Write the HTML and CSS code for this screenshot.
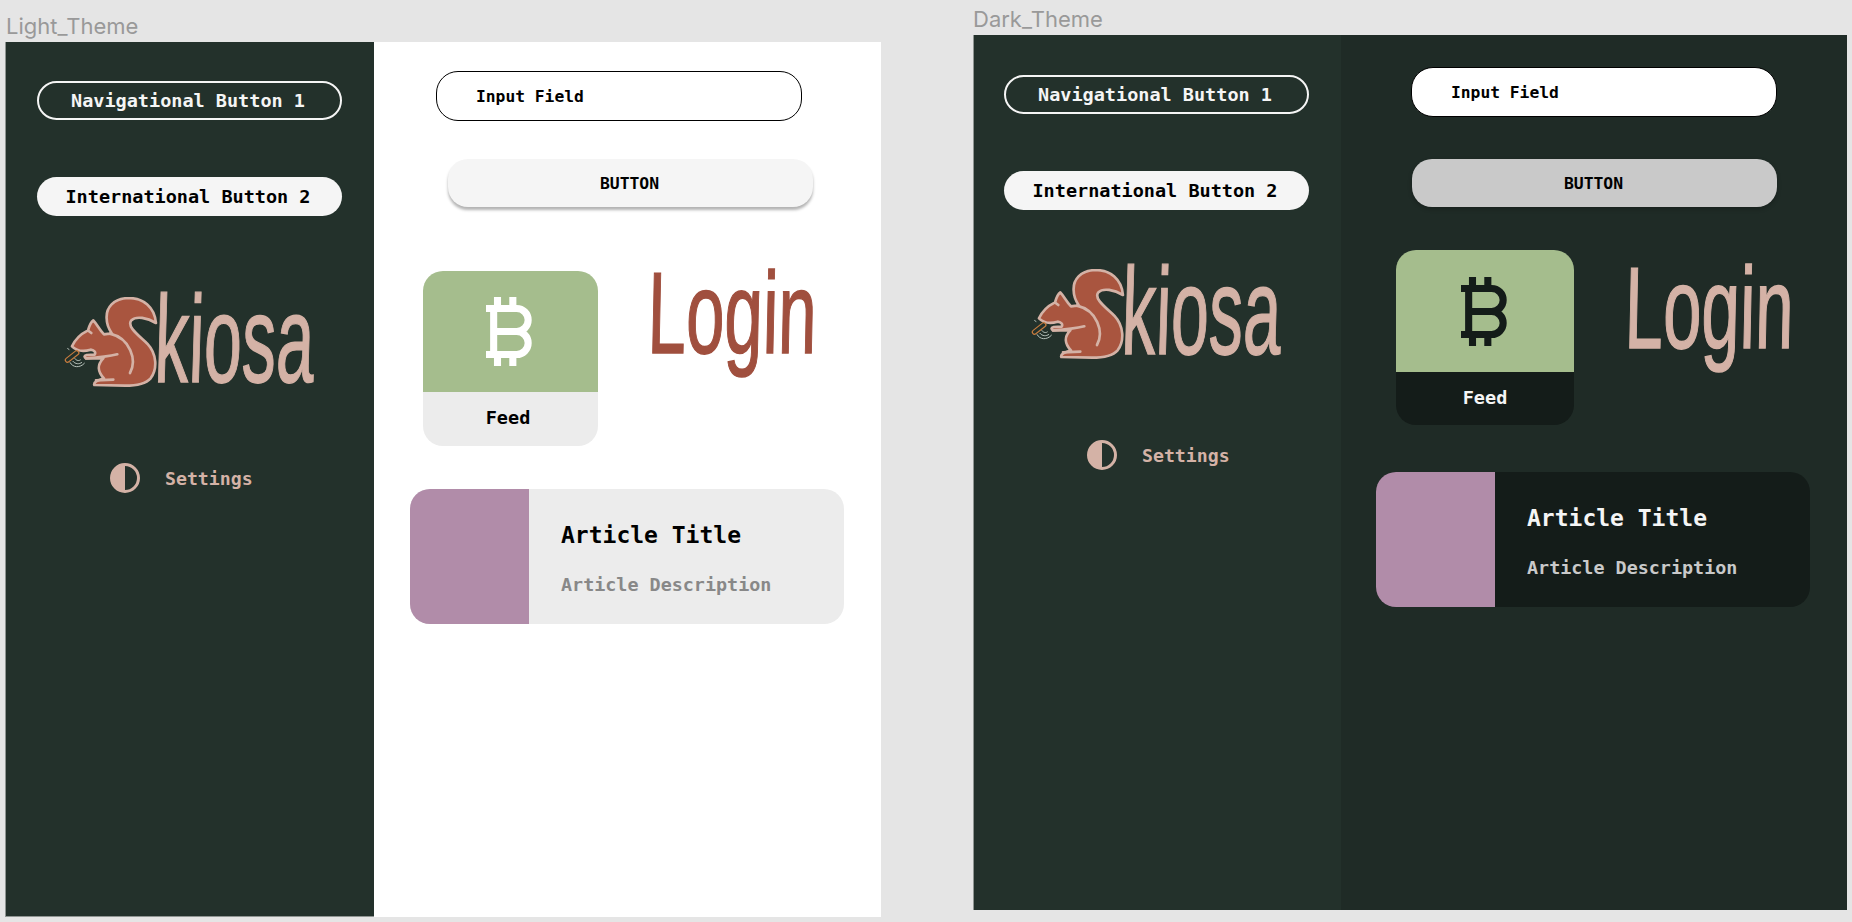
FILE: index.html
```html
<!DOCTYPE html>
<html lang="en">
<head>
<meta charset="utf-8">
<title>Themes</title>
<link rel="stylesheet" href="styles.css">
</head>
<body>
<svg class="defs" width="0" height="0" aria-hidden="true">
  <defs>
    <symbol id="squirrel" viewBox="0 -12 295 270">
      <path class="sq-body" d="M140 52C138 20 160 -7 205 -9C250 -9 284 18 288 66C262 50 228 44 214 58C200 76 232 100 262 128C292 160 292 205 272 232C256 250 225 254 195 254L103 252C100 244 112 238 132 232C114 214 110 192 130 172L78 172C72 168 72 164 80 162L104 161C108 154 104 148 92 146C72 152 50 150 36 136C44 118 60 100 84 88C88 74 94 62 100 58C110 68 118 86 132 100C142 98 150 98 156 98C146 84 140 70 140 52Z"/>
      <path class="sq-line" d="M210 216C232 176 210 112 150 98M78 172C110 170 140 168 172 160M108 238L160 236M86 90L94 96"/>
      <rect class="sq-nut" x="12" y="160" width="48" height="13" rx="6.5" transform="rotate(-38 36 166)"/>
      <path class="sq-wifi" d="M38 180C46 190 58 190 66 184M44 172C50 180 58 180 62 176M30 184C38 200 60 202 74 186M28 146L22 142"/>
    </symbol>
    <symbol id="bitcoin" viewBox="6 3 12 18">
      <path class="btc" d="M6 6h8a3 3 0 0 1 0 6a3 3 0 0 1 0 6h-8M8 6v12M8 12h6M9 3v3M13 3v3M9 18v3M13 18v3"/>
    </symbol>
  </defs>
</svg>

<section class="board light">
  <h2 class="board-label">Light_Theme</h2>
  <div class="frame">
    <aside class="sidebar">
      <a class="nav-btn outline">Navigational Button 1</a>
      <a class="nav-btn solid">International Button 2</a>
      <div class="logo">
        <svg class="squirrel"><use href="#squirrel"/></svg>
        <span class="logo-text">kiosa</span>
      </div>
      <div class="settings">
        <svg class="contrast" viewBox="0 0 30 30"><circle class="ring" cx="15" cy="15" r="13.5"/><path class="half" d="M15 1.5a13.500 13.500 0 0 0 0 27Z"/></svg>
        <span>Settings</span>
      </div>
    </aside>
    <main class="content">
      <div class="input">Input Field</div>
      <button class="action">BUTTON</button>
      <div class="row">
        <div class="feed">
          <div class="feed-top"><svg class="btc-icon"><use href="#bitcoin"/></svg></div>
          <div class="feed-label">Feed</div>
        </div>
        <div class="login">Login</div>
      </div>
      <article class="article">
        <div class="thumb"></div>
        <div class="article-body">
          <h3>Article Title</h3>
          <p>Article Description</p>
        </div>
      </article>
    </main>
  </div>
</section>

<section class="board dark">
  <h2 class="board-label">Dark_Theme</h2>
  <div class="frame">
    <aside class="sidebar">
      <a class="nav-btn outline">Navigational Button 1</a>
      <a class="nav-btn solid">International Button 2</a>
      <div class="logo">
        <svg class="squirrel"><use href="#squirrel"/></svg>
        <span class="logo-text">kiosa</span>
      </div>
      <div class="settings">
        <svg class="contrast" viewBox="0 0 30 30"><circle class="ring" cx="15" cy="15" r="13.5"/><path class="half" d="M15 1.5a13.500 13.500 0 0 0 0 27Z"/></svg>
        <span>Settings</span>
      </div>
    </aside>
    <main class="content">
      <div class="input">Input Field</div>
      <button class="action">BUTTON</button>
      <div class="row">
        <div class="feed">
          <div class="feed-top"><svg class="btc-icon"><use href="#bitcoin"/></svg></div>
          <div class="feed-label">Feed</div>
        </div>
        <div class="login">Login</div>
      </div>
      <article class="article">
        <div class="thumb"></div>
        <div class="article-body">
          <h3>Article Title</h3>
          <p>Article Description</p>
        </div>
      </article>
    </main>
  </div>
</section>
</body>
</html>
```
FILE: styles.css
```css
* { box-sizing: border-box; }
html, body { margin: 0; height: 100%; overflow: hidden; }
body { position: relative; background: #e5e5e5; font-family: "DejaVu Sans Mono", monospace; }
.defs { position: absolute; }

.board { position: absolute; }
.light { left: 5px; top: 0; width: 876px; }
.dark { left: 973px; top: 0; width: 874px; }

.board-label { margin: 0; font: 400 22px/24px Inter, sans-serif; color: #999; }
.light .board-label { padding: 14px 0 4px 1px; }
.dark .board-label { padding: 7px 0 4px 0; }

.frame { display: flex; }
.light .frame { height: 875px; background: #fff; }
.dark .frame { height: 875px; background: #1f2b26; }

.sidebar { width: 369px; flex: none; background: #23312b; padding: 39px 0 0 31px; border-left: 1px solid #8f9592; }
.light .sidebar { border-bottom: 1px solid #8f9592; }
.dark .sidebar { width: 368px; padding-top: 40px; padding-left: 30px; }

.nav-btn { display: flex; align-items: center; justify-content: center; width: 305px; height: 39px; padding-right: 3px; border-radius: 20px; font-size: 18.5px; font-weight: 700; }
.outline { border: 2.5px solid #f5f5f5; color: #f5f5f5; }
.solid { margin-top: 57px; background: #f5f5f5; color: #000; }

.logo { display: flex; margin: 81px 0 0 23px; height: 90px; }
.dark .logo { margin-top: 59px; }
.squirrel { width: 98.3px; height: 90px; flex: none; }
.sq-body { fill: #a9553f; stroke: #d4b2a6; stroke-width: 8; stroke-linejoin: round; }
.sq-line { fill: none; stroke: #d4b2a6; stroke-width: 8; stroke-linecap: round; }
.sq-nut { fill: none; stroke: #c87c3e; stroke-width: 3.5; }
.sq-wifi { fill: none; stroke: #b9c4bd; stroke-width: 3; }
.logo-text { display: block; margin-left: -3px; font: 400 124px/84px "Liberation Sans Narrow", "Liberation Sans", sans-serif; color: #d4b2a6; -webkit-text-stroke: 1.4px #d4b2a6; transform: scaleX(.55) skewX(-3deg); transform-origin: left center; }

.settings { display: flex; align-items: center; gap: 25px; margin: 76px 0 0 73px; color: #d4b2a6; font-size: 18.2px; font-weight: 700; }
.dark .settings { margin: 81px 0 0 83px; }
.contrast { width: 30px; height: 30px; flex: none; }
.ring { fill: none; stroke: #d4b2a6; stroke-width: 3; }
.half { fill: #d4b2a6; }

.content { flex: 1; display: flex; flex-direction: column; align-items: flex-start; }
.light .content { padding: 29px 0 0 62px; }
.dark .content { padding: 32px 0 0 71px; }

.input { display: flex; width: 366px; padding: 15px 0 0 39px; border: 1.5px solid #000; border-radius: 22px; background: #fff; color: #000; font-size: 16.3px; font-weight: 700; line-height: 20px; }
.light .input { height: 50px; }
.dark .input { height: 50px; margin-left: -1px; }

.action { display: block; width: 365px; height: 48px; padding: 0 2px 0 0; border: 0; border-radius: 20px; font: 700 16.4px "DejaVu Sans Mono", monospace; color: #000; }
.light .action { margin: 38px 0 0 12px; background: #f5f5f5; box-shadow: 0 3px 3px rgba(0,0,0,.3); }
.dark .action { margin: 42px 0 0; background: #c9c9c9; box-shadow: 0 2px 4px rgba(0,0,0,.25); }

.row { display: flex; align-items: flex-start; }
.light .row { margin: 64px 0 0 -13px; }
.dark .row { margin: 43px 0 0 -16px; }

.feed { width: 175px; height: 175px; border-radius: 20px; overflow: hidden; display: flex; flex-direction: column; }
.dark .feed { width: 178px; }
.feed-top { height: 121px; display: flex; align-items: center; justify-content: center; background: #a5bd8d; flex: none; }
.dark .feed-top { height: 122px; }
.btc-icon { width: 46px; height: 69px; margin-left: -3px; }
.btc { fill: none; stroke: currentColor; stroke-width: 1.85; }
.light .btc-icon { color: #fff; }
.dark .btc-icon { color: #141c19; }
.feed-label { flex: 1; display: flex; align-items: center; justify-content: center; padding: 0 5px 3px 0; font-size: 18.5px; font-weight: 700; }
.light .feed-label { background: #ececec; color: #000; }
.dark .feed-label { background: #141c19; color: #f5f5f5; padding: 0 0 2px; }

.login { font: 400 116px/112px "Liberation Sans Narrow", "Liberation Sans", sans-serif; -webkit-text-stroke: 1.5px currentColor; transform: scaleX(.595) skewX(-2deg); transform-origin: left top; }
.light .login { margin: -14px 0 0 51px; color: #a04f3e; }
.dark .login { margin: 2px 0 0 52px; color: #d4b2a6; }

.article { display: flex; width: 434px; height: 135px; border-radius: 20px; overflow: hidden; }
.light .article { margin: 43px 0 0 -26px; background: #ececec; color: #000; }
.dark .article { margin: 47px 0 0 -36px; background: #141c19; color: #f5f5f5; }
.thumb { width: 119px; flex: none; background: #b18ca9; }
.article-body { padding: 31px 0 0 32px; }
.article-body h3 { margin: 0; font-size: 23px; font-weight: 700; line-height: 30px; }
.article-body p { margin: 24px 0 0; font-size: 18.4px; font-weight: 700; line-height: 22px; color: #888; }
.dark .article-body p { color: #c9c9c9; }
```
